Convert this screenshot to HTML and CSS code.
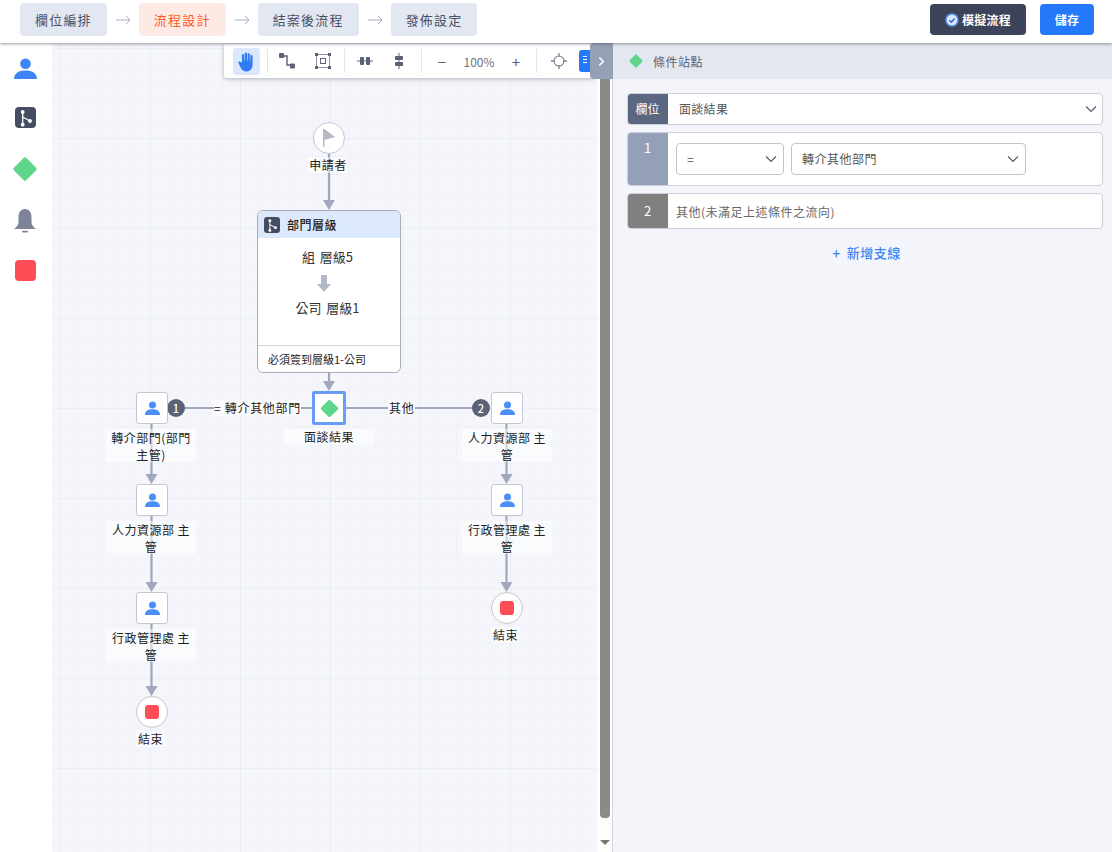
FILE: index.html
```html
<!doctype html>
<html lang="zh-Hant">
<head>
    <meta charset="utf-8">
    <title>流程設計</title>
    <link rel="stylesheet" href="styles.css">
</head>
<body>
    <!-- shared icons -->
    <svg class="defs" width="0" height="0">
        <symbol id="i-person" viewBox="0 0 24 22"><circle cx="12" cy="6" r="5.6"/><path d="M0 22C0 15.5 5 13 12 13s12 2.5 12 9z"/></symbol>
        <symbol id="i-diamond" viewBox="0 0 24 24"><rect x="4.5" y="4.5" width="15" height="15" rx="1.5" transform="rotate(45 12 12)"/></symbol>
        <symbol id="i-chevron" viewBox="0 0 12 8"><path d="M1 1.5l5 5 5-5" fill="none" stroke="#555b68" stroke-width="1.2"/></symbol>
        <symbol id="i-branch" viewBox="0 0 21 21"><rect width="21" height="21" rx="4" fill="#454d63"/><path d="M7.7 5v12.7M7.7 10l7.3 4" stroke="#fff" stroke-width="1.3" fill="none"/><circle cx="7.7" cy="5" r="1.9" fill="#fff"/><circle cx="7.7" cy="17.7" r="1.9" fill="#fff"/><circle cx="15" cy="14" r="1.9" fill="#fff"/></symbol>
    </svg>

    <header class="topbar">
        <nav class="steps">
            <a class="step">欄位編排</a>
            <svg class="step-arrow" viewBox="0 0 15 10"><path d="M0 5h14M10 1l4 4-4 4" fill="none" stroke="#a5adc2"/></svg>
            <a class="step active">流程設計</a>
            <svg class="step-arrow" viewBox="0 0 15 10"><path d="M0 5h14M10 1l4 4-4 4" fill="none" stroke="#a5adc2"/></svg>
            <a class="step">結案後流程</a>
            <svg class="step-arrow" viewBox="0 0 15 10"><path d="M0 5h14M10 1l4 4-4 4" fill="none" stroke="#a5adc2"/></svg>
            <a class="step">發佈設定</a>
        </nav>
        <div class="actions">
            <button class="btn btn-dark">
                <svg class="btn-icon" viewBox="0 0 14 14"><circle cx="7" cy="7" r="6" fill="#dfe8fb" stroke="#5b93f5" stroke-width="1.6"/><path d="M4.3 7.2l2 1.9 3.4-3.6" fill="none" stroke="#2f6fe0" stroke-width="1.5"/></svg>
                模擬流程
            </button>
            <button class="btn btn-blue">儲存</button>
        </div>
    </header>

    <main class="workspace">
        <aside class="palette">
            <svg class="pal-person"><use href="#i-person"/></svg>
            <svg class="pal-branch"><use href="#i-branch"/></svg>
            <svg class="pal-diamond"><use href="#i-diamond"/></svg>
            <svg class="pal-bell" viewBox="0 0 24 25"><path d="M12 1C7.5 1 5.5 5 5.5 9v5c0 3-2 5-4.5 7h22c-2.5-2-4.5-4-4.5-7V9C18.5 5 16.5 1 12 1z"/><rect x="9" y="22.8" width="6" height="1.6" rx=".8"/></svg>
            <span class="pal-stop"></span>
        </aside>

        <section class="canvas">
            <!-- edges, drawn in page coordinates -->
            <svg class="edges" viewBox="52 43 545 809">
                <g class="edge">
                    <path d="M329 154V201"/>
                    <path d="M329 373V382"/>
                    <path d="M151.5 423V475"/>
                    <path d="M151.5 516V583"/>
                    <path d="M151.5 624V687"/>
                    <path d="M506.5 423V475"/>
                    <path d="M506.5 516V583"/>
                    <path d="M185 408H312"/>
                    <path d="M346 408H473"/>
                </g>
                <g class="arrow">
                    <path d="M323 200H335L329 210z"/>
                    <path d="M323 381H335L329 391z"/>
                    <path d="M145.5 474H157.5L151.5 484z"/>
                    <path d="M145.5 582H157.5L151.5 592z"/>
                    <path d="M145.5 686H157.5L151.5 696z"/>
                    <path d="M500.5 474H512.5L506.5 484z"/>
                    <path d="M500.5 582H512.5L506.5 592z"/>
                </g>
            </svg>

            <div class="node round n-start">
                <svg class="flag" viewBox="0 0 12 18"><path d="M0 0h1.5v18H0zM1.5 0L12 8 1.5 11z"/></svg>
            </div>
            <div class="label l-start">申請者</div>

            <div class="card">
                <div class="card-head"><svg class="card-icon"><use href="#i-branch"/></svg>部門層級</div>
                <div class="card-body">
                    <div>組 層級5</div>
                    <svg class="down" viewBox="0 0 14 17"><path d="M4 0h6v9h4l-7 8-7-8h4z"/></svg>
                    <div>公司 層級1</div>
                </div>
                <div class="card-foot">必須簽到層級1-公司</div>
            </div>

            <div class="node selected n-cond"><svg class="cond-icon"><use href="#i-diamond"/></svg></div>
            <div class="label l-cond">面談結果</div>

            <span class="badge b-one">1</span>
            <span class="badge b-two">2</span>
            <div class="edge-label e-one">= 轉介其他部門</div>
            <div class="edge-label e-two">其他</div>

            <div class="node n-l1"><svg class="node-person"><use href="#i-person"/></svg></div>
            <div class="label two l-l1">轉介部門(部門主管)</div>
            <div class="node n-l2"><svg class="node-person"><use href="#i-person"/></svg></div>
            <div class="label two l-l2">人力資源部 主管</div>
            <div class="node n-l3"><svg class="node-person"><use href="#i-person"/></svg></div>
            <div class="label two l-l3">行政管理處 主管</div>
            <div class="node round n-l4"><span class="stop"></span></div>
            <div class="label l-l4">結束</div>

            <div class="node n-r1"><svg class="node-person"><use href="#i-person"/></svg></div>
            <div class="label two l-r1">人力資源部 主管</div>
            <div class="node n-r2"><svg class="node-person"><use href="#i-person"/></svg></div>
            <div class="label two l-r2">行政管理處 主管</div>
            <div class="node round n-r3"><span class="stop"></span></div>
            <div class="label l-r3">結束</div>

            <div class="toolbar">
                <span class="tool hand">
                    <svg viewBox="0 0 18 20" width="18" height="21"><path d="M4 11V3.5a1.1 1.1 0 0 1 2.2 0V9h.6V2a1.1 1.1 0 0 1 2.2 0v7h.6V2.8a1.1 1.1 0 0 1 2.2 0V9h.6V4.5a1.1 1.1 0 0 1 2.2 0V13c0 4-2.5 7-6 7-3 0-4.5-1.5-6-4L.5 11.5c-.6-1 .8-2.2 1.7-1.3z" fill="#2f7bf5"/></svg>
                </span>
                <i class="divider d-1"></i>
                <span class="tool t-route">
                    <svg viewBox="0 0 16 16" width="16" height="16"><path d="M3 3h5v9h5" fill="none" stroke="#5b6277" stroke-width="1.4"/><rect x="0" y="0" width="5" height="5" rx="1" fill="#5b6277"/><rect x="11" y="10.5" width="5" height="5" rx="1" fill="#5b6277"/></svg>
                </span>
                <span class="tool">
                    <svg viewBox="0 0 16 16" width="16" height="16"><rect x="1.5" y="1.5" width="13" height="13" fill="none" stroke="#8c93a5"/><rect x="5.5" y="5.5" width="5" height="5" fill="none" stroke="#5b6277"/><g fill="#5b6277"><rect width="3" height="3"/><rect x="13" width="3" height="3"/><rect y="13" width="3" height="3"/><rect x="13" y="13" width="3" height="3"/></g></svg>
                </span>
                <i class="divider d-2"></i>
                <span class="tool t-align">
                    <svg viewBox="0 0 16 16" width="16" height="16"><path d="M0 8h16" stroke="#5b6277"/><rect x="3" y="4" width="4" height="8" rx="1" fill="#5b6277"/><rect x="9" y="4" width="4" height="8" rx="1" fill="#5b6277"/></svg>
                </span>
                <span class="tool">
                    <svg viewBox="0 0 16 16" width="16" height="16"><path d="M8 0v16" stroke="#5b6277"/><rect x="4" y="3" width="8" height="4" rx="1" fill="#5b6277"/><rect x="4" y="9" width="8" height="4" rx="1" fill="#5b6277"/></svg>
                </span>
                <i class="divider d-3"></i>
                <span class="zoom-btn z-minus">−</span>
                <span class="zoom-val">100%</span>
                <span class="zoom-btn">+</span>
                <i class="divider d-4"></i>
                <span class="tool t-target">
                    <svg viewBox="0 0 16 16" width="16" height="16"><circle cx="8" cy="8" r="5" fill="none" stroke="#7a8194" stroke-width="1.1"/><path d="M8 0v4M8 12v4M0 8h4M12 8h4" stroke="#7a8194" stroke-width="1.3"/></svg>
                </span>
                <span class="tool-blue"><i></i><i></i><i></i></span>
            </div>
        </section>

        <div class="scrollbar">
            <span class="thumb"></span>
            <span class="scroll-down"></span>
        </div>

        <aside class="panel">
            <div class="panel-handle">
                <svg viewBox="0 0 8 12" width="7" height="11"><path d="M1.5 1.5L6 6l-4.500 4.500" fill="none" stroke="#fff" stroke-width="1.8"/></svg>
            </div>
            <div class="panel-head">
                <svg class="head-diamond"><use href="#i-diamond"/></svg>
                條件站點
            </div>
            <div class="panel-body">
                <div class="field field-main">
                    <span class="tag tag-field">欄位</span>
                    <div class="field-value">面談結果<svg class="chev"><use href="#i-chevron"/></svg></div>
                </div>
                <div class="field field-cond">
                    <span class="tag tag-one">1</span>
                    <div class="cond-row">
                        <div class="select sel-op">=<svg class="chev"><use href="#i-chevron"/></svg></div>
                        <div class="select sel-val">轉介其他部門<svg class="chev"><use href="#i-chevron"/></svg></div>
                    </div>
                </div>
                <div class="field field-else">
                    <span class="tag tag-two">2</span>
                    <div class="else-text">其他(未滿足上述條件之流向)</div>
                </div>
                <a class="add-branch"><span class="plus">+</span>新增支線</a>
            </div>
        </aside>
    </main>
</body>
</html>
```

FILE: styles.css
```css
html, body {
    height: 100%;
}
body {
    margin: 0;
    height: 852px;
    overflow: hidden;
    display: flex;
    flex-direction: column;
    font-family: "Noto Sans CJK TC", "Noto Sans", sans-serif;
    font-size: 12px;
    color: #222;
    background: #fff;
}
.defs {
    position: absolute;
}

/* top bar */
.topbar {
    height: 43px;
    flex: none;
    display: flex;
    align-items: center;
    justify-content: space-between;
    padding: 0 18px 4px 20px;
    box-sizing: border-box;
    background: #fff;
    box-shadow: 0 1px 3px rgba(70, 75, 95, .55);
    position: relative;
    z-index: 5;
}
.steps {
    display: flex;
    align-items: center;
}
.step {
    height: 33px;
    padding: 0 15px;
    display: flex;
    align-items: center;
    background: #e3e7f2;
    border-radius: 4px;
    color: #4a5062;
    font-size: 13px;
    letter-spacing: 1.2px;
}
.step.active {
    background: #feeae5;
    color: #ff5a24;
}
.step-arrow {
    width: 15px;
    height: 10px;
    margin: 0 8px 0 9px;
}
.actions {
    display: flex;
    gap: 14px;
}
.btn {
    height: 31px;
    border: 0;
    border-radius: 4px;
    font: inherit;
    font-weight: 700;
    color: #fff;
    letter-spacing: .3px;
    display: flex;
    align-items: center;
    justify-content: center;
}
.btn-dark {
    width: 96px;
    background: #3d4459;
    gap: 3px;
}
.btn-icon {
    width: 14px;
    height: 14px;
}
.btn-blue {
    width: 54px;
    background: #2478fa;
}

.workspace {
    flex: 1;
    display: flex;
    min-height: 0;
}

/* left palette */
.palette {
    width: 52px;
    flex: none;
    background: #fff;
    display: flex;
    flex-direction: column;
    align-items: center;
    padding-top: 15px;
    box-sizing: border-box;
    padding-right: 2px;
}
.palette svg, .pal-stop {
    display: block;
    flex: none;
}
.pal-person {
    width: 23px;
    height: 21px;
    fill: #3e86f7;
}
.pal-branch {
    width: 21px;
    height: 21px;
    margin-top: 28px;
}
.pal-diamond {
    width: 28px;
    height: 28px;
    margin-top: 27px;
    fill: #5fd68b;
}
.pal-bell {
    width: 24px;
    height: 25px;
    margin-top: 25px;
    fill: #7d8498;
}
.pal-stop {
    width: 21px;
    height: 21px;
    margin-top: 27px;
    border-radius: 4px;
    background: #ff4d58;
}

/* canvas */
.canvas {
    width: 545px;
    flex: none;
    position: relative;
    overflow: hidden;
    background-color: #f4f6fb;
    background-image:
        linear-gradient(#ebedf4 1px, transparent 1px),
        linear-gradient(90deg, #ebedf4 1px, transparent 1px),
        linear-gradient(#f0f2f8 1px, transparent 1px),
        linear-gradient(90deg, #f0f2f8 1px, transparent 1px);
    background-size: 90px 90px, 90px 90px, 18px 18px, 18px 18px;
    background-position: 0 5px, 8px 0, 0 5px, 8px 0;
}
.edges {
    position: absolute;
    left: 0;
    top: 0;
    width: 545px;
    height: 809px;
}
.edge path {
    fill: none;
    stroke: #a0a8bb;
    stroke-width: 2.2;
}
.arrow path {
    fill: #a0a8bb;
}
.node {
    position: absolute;
    width: 32px;
    height: 32px;
    box-sizing: border-box;
    background: #fff;
    border: 1px solid #c5c8d0;
    border-radius: 3px;
    display: flex;
    align-items: center;
    justify-content: center;
}
.node.round {
    border-radius: 50%;
}
.node.selected {
    width: 34px;
    height: 34px;
    border: 3px solid #6a9bf5;
    border-radius: 2px;
}
.node-person {
    width: 15px;
    height: 14px;
    fill: #4a8ff8;
}
.cond-icon {
    width: 21px;
    height: 21px;
    fill: #5fd68b;
}
.flag {
    width: 12px;
    height: 18px;
    fill: #b5b9c3;
}
.stop {
    width: 14px;
    height: 14px;
    border-radius: 3px;
    background: #ff4d58;
}
.n-start { left: 261px; top: 79px; }
.n-cond { left: 260px; top: 348px; }
.n-l1 { left: 84px; top: 349px; }
.n-l2 { left: 84px; top: 441px; }
.n-l3 { left: 84px; top: 549px; }
.n-l4 { left: 84px; top: 653px; }
.n-r1 { left: 439px; top: 349px; }
.n-r2 { left: 439px; top: 441px; }
.n-r3 { left: 439px; top: 549px; }

.label {
    position: absolute;
    text-align: center;
    line-height: 16px;
    letter-spacing: .5px;
    background: rgba(255, 255, 255, .5);
    color: #1d1d1f;
}
.label.two {
    width: 90px;
    height: 33px;
    line-height: 17px;
    padding: 0 5px;
    box-sizing: border-box;
}
.l-start { left: 256px; top: 114px; width: 40px; }
.l-cond { left: 232px; top: 386px; width: 90px; }
.l-l1 { left: 54px; top: 386px; }
.l-l2 { left: 54px; top: 478px; }
.l-l3 { left: 54px; top: 586px; }
.l-l4 { left: 84px; top: 688px; width: 29px; }
.l-r1 { left: 410px; top: 386px; }
.l-r2 { left: 410px; top: 478px; }
.l-r3 { left: 439px; top: 584px; width: 29px; }

/* approval card */
.card {
    position: absolute;
    left: 205px;
    top: 167px;
    width: 144px;
    height: 163px;
    box-sizing: border-box;
    display: flex;
    flex-direction: column;
    background: #fff;
    border: 1px solid #a9adb8;
    border-radius: 6px;
    overflow: hidden;
}
.card-head {
    height: 27px;
    flex: none;
    display: flex;
    align-items: center;
    gap: 7px;
    padding-left: 6px;
    background: #dce8fb;
    font-size: 12px;
    font-weight: 500;
    letter-spacing: .5px;
    color: #222;
}
.card-icon {
    width: 16px;
    height: 16px;
}
.card-body {
    flex: 1;
    display: flex;
    flex-direction: column;
    align-items: center;
    padding: 9px 3px 0 0;
    font-size: 13px;
    line-height: 19px;
    word-spacing: 2px;
    color: #333;
}
.down {
    width: 14px;
    height: 17px;
    fill: #b3b9ca;
    margin: 9px 0 6px -7px;
}
.card-foot {
    height: 26px;
    flex: none;
    border-top: 1px solid #d4d6dc;
    padding-left: 10px;
    font-size: 11px;
    line-height: 26px;
    color: #222;
}

.badge {
    position: absolute;
    width: 18px;
    height: 18px;
    border-radius: 50%;
    background: #5b6277;
    color: #fff;
    font-size: 11px;
    font-weight: 500;
    line-height: 18px;
    text-align: center;
}
.b-one { left: 115px; top: 356px; }
.b-two { left: 420px; top: 356px; }
.edge-label {
    position: absolute;
    height: 16px;
    line-height: 16px;
    letter-spacing: .7px;
    background: #fbfbfe;
    color: #222;
    white-space: nowrap;
}
.e-one { left: 162px; top: 357px; }
.e-two { left: 336px; top: 357px; padding: 0 1px; }

/* toolbar over the canvas */
.toolbar {
    position: absolute;
    left: 172px;
    top: 1px;
    width: 372px;
    height: 34px;
    display: flex;
    align-items: center;
    padding-left: 9px;
    box-sizing: border-box;
    background: #fff;
    border-radius: 3px;
    box-shadow: 0 1px 4px rgba(70, 75, 95, .4);
    overflow: hidden;
}
.tool {
    width: 36px;
    height: 27px;
    flex: none;
    display: flex;
    align-items: center;
    justify-content: center;
}
.tool.hand {
    width: 27px;
    background: #dbe8fc;
    border-radius: 3px;
}
.divider {
    width: 1px;
    height: 24px;
    flex: none;
    background: #e3e6ed;
}
.d-1 { margin: 0 1px 0 7px; }
.d-2 { margin: 0 3px 0 3px; }
.d-3 { margin: 0 4px 0 4px; }
.d-4 { margin: 0 4px 0 11px; }
.tool.t-align { margin-right: -2px; margin-left: -1px; }
.zoom-btn {
    width: 18px;
    flex: none;
    text-align: center;
    font-size: 15px;
    color: #5b6277;
}
.z-minus { margin-left: 7px; }
.zoom-val {
    width: 38px;
    margin: 0 9px;
    flex: none;
    text-align: center;
    font-size: 12px;
    color: #6a7082;
}
.tool-blue {
    width: 22px;
    height: 22px;
    flex: none;
    margin-left: 2px;
    padding: 6px 0 0 4px;
    box-sizing: border-box;
    display: flex;
    flex-direction: column;
    gap: 2px;
    background: #2478fa;
    border-radius: 3px;
}
.tool-blue i {
    width: 4px;
    height: 1px;
    background: #fff;
}

/* fake scroll bar between canvas and panel */
.scrollbar {
    width: 15px;
    flex: none;
    position: relative;
    background: #fdfdfe;
}
.thumb {
    position: absolute;
    left: 3px;
    top: 0;
    width: 10px;
    height: 775px;
    background: #8a8a8a;
    border-radius: 0 0 4px 4px;
}
.scroll-down {
    position: absolute;
    left: 3px;
    bottom: 7px;
    border-top: 5px solid #777;
    border-left: 5px solid transparent;
    border-right: 5px solid transparent;
}

/* right panel */
.panel {
    flex: 1;
    position: relative;
    background: #f3f5fa;
    border-left: 1px solid #d4d7e0;
    display: flex;
    flex-direction: column;
}
.panel-handle {
    position: absolute;
    left: -23px;
    top: 0;
    width: 23px;
    height: 36px;
    display: flex;
    align-items: center;
    justify-content: center;
    background: #959fb5;
    border-radius: 4px 0 0 4px;
}
.panel-head {
    height: 36px;
    flex: none;
    display: flex;
    align-items: center;
    gap: 9px;
    padding-left: 15px;
    background: #e3e7f0;
    color: #5b6277;
    letter-spacing: .5px;
}
.head-diamond {
    width: 16px;
    height: 16px;
    fill: #5fd68b;
}
.panel-body {
    flex: 1;
    padding: 14px 9px 0 14px;
    display: flex;
    flex-direction: column;
    gap: 7px;
}
.field {
    display: flex;
    background: #fff;
    border: 1px solid #cdd0d9;
    border-radius: 4px;
    box-sizing: border-box;
    overflow: hidden;
}
.tag {
    width: 41px;
    flex: none;
    margin: -1px 0 -1px -1px;
    color: #fff;
    text-align: center;
}
.tag-field {
    background: #5b6680;
    line-height: 32px;
    font-size: 12px;
}
.tag-one {
    background: #949fb8;
    font-size: 13px;
    line-height: 32px;
}
.tag-two {
    background: #808080;
    font-size: 13px;
    line-height: 36px;
}
.field-main { height: 32px; }
.field-cond { height: 54px; }
.field-else { height: 36px; }
.field-value {
    flex: 1;
    position: relative;
    padding-left: 11px;
    line-height: 29px;
    font-size: 12px;
    letter-spacing: .3px;
    color: #555;
}
.chev {
    position: absolute;
    right: 5px;
    top: 50%;
    width: 12px;
    height: 8px;
    margin-top: -4px;
}
.cond-row {
    display: flex;
    gap: 7px;
    padding: 10px 0 0 8px;
}
.select {
    position: relative;
    height: 32px;
    box-sizing: border-box;
    background: #fff;
    border: 1px solid #c0c4ce;
    border-radius: 4px;
    padding-left: 10px;
    line-height: 30px;
    font-size: 12px;
    letter-spacing: .5px;
    color: #555;
}
.select .chev {
    right: 6px;
}
.sel-op { width: 108px; }
.sel-val { width: 235px; }
.else-text {
    padding-left: 8px;
    line-height: 36px;
    font-size: 12px;
    letter-spacing: .5px;
    color: #666;
}
.add-branch {
    margin-top: 7px;
    align-self: center;
    margin-left: 3px;
    display: flex;
    align-items: center;
    gap: 6px;
    color: #3e86f7;
    font-size: 13px;
    font-weight: 500;
    letter-spacing: .5px;
}
.plus {
    font-size: 14px;
    line-height: 16px;
}
```
